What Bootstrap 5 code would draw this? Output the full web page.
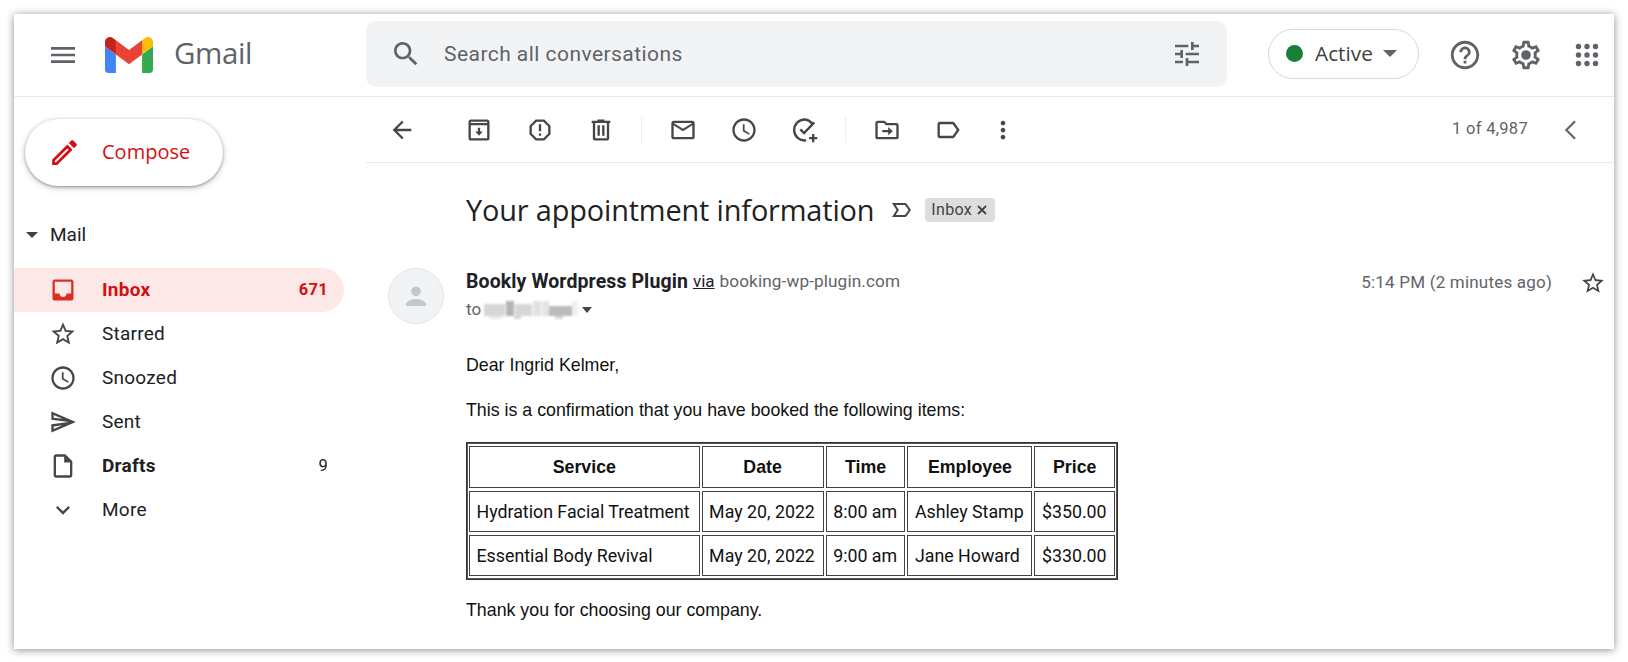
<!DOCTYPE html>
<html lang="en">
<head>
<meta charset="utf-8">
<title>Gmail</title>
<link href="https://cdn.jsdelivr.net/npm/bootstrap@5.3.0/dist/css/bootstrap.min.css" rel="stylesheet">
<style>
html,body{height:662px;overflow:hidden;background:#fff;font-family:Roboto,"Liberation Sans",sans-serif;color:#202124}
svg{display:block;flex:none}
.gm-window{margin:14px 14px 0;height:635px;background:#fff;box-shadow:0 1px 8px rgba(0,0,0,.45);overflow:hidden}
.gm-header{height:83px;border-bottom:1px solid #e6ebef}
.gm-brand{width:352px;padding-left:33px}
.gm-menu{width:32px;height:32px;fill:#5f6368;margin-right:26px}
.gm-wordmark{font-family:"Open Sans",sans-serif;font-size:29.5px;color:#5f6368;margin-left:21px;letter-spacing:-.4px;margin-top:-4px}
.gm-search{width:861px;height:66px;margin-top:-3px;background:#f1f3f4;border-radius:10px;padding:0 24px 0 24px;color:#5f6368;font-size:21px}
.gm-search-text{margin-left:22px;letter-spacing:.45px;margin-top:2px}
.gm-pill{width:151px;height:50px;margin-left:41px;margin-top:-3px;border:1.5px solid #d5d8dc;border-radius:25px;padding-left:17px;font-size:20.8px;font-family:"Open Sans",Roboto,sans-serif;color:#3c4043}
.gm-dot{width:17px;height:17px;border-radius:50%;background:#188038;margin-right:12px}
.gm-caret{width:0;height:0;border-left:7px solid transparent;border-right:7px solid transparent;border-top:7px solid #5f6368;margin-left:10px}
.gm-side-icons{margin-left:29px;gap:27px;fill:#5f6368}
.gm-side{width:352px;padding-top:22px}
.gm-compose{width:198px;height:67px;margin-left:11px;border-radius:34px;background:#fff;box-shadow:0 1px 3px rgba(60,64,67,.45),0 2px 6px rgba(60,64,67,.25);color:#d50f0f;font-size:20px;font-family:"Open Sans",Roboto,sans-serif;padding-left:23px;gap:21px}
.gm-compose span{margin-top:-2px}
.gm-mail{margin:37px 0 21px 12px;font-size:19px;height:24px}
.gm-mail-caret{width:0;height:0;border-left:6px solid transparent;border-right:6px solid transparent;border-top:6px solid #3c4043;margin-right:12px}
.gm-row{height:44px;width:330px;padding:0 16px 0 35px;border-radius:0 22px 22px 0;font-size:19px;letter-spacing:.25px}
.gm-row svg{width:28px;height:28px;fill:#444746;margin-right:25px}
.gm-row-on{background:#fce8e6;color:#d50f0f;font-weight:700}
.gm-row-on svg{fill:#d93025}
.gm-count{margin-left:auto;font-size:16.5px}
.gm-toolbar{height:66px;border-bottom:1px solid #e6ebef;padding-left:5px;fill:#444746}
.gm-slot{width:61px;display:flex;justify-content:center;align-items:center}
.gm-slot svg{width:28px;height:28px}
.gm-back{margin-right:16px}
.gm-sep{width:1px;height:26px;background:#eceff1;margin:0 10px 0 10px}
.gm-more{margin-left:-6px}
.gm-range{margin-left:auto;font-size:16.5px;color:#5f6368;letter-spacing:.3px;margin-right:29px}
.gm-prev{width:28px;height:28px;fill:none;stroke:#5f6368;stroke-width:1.8;margin-right:29px}
.gm-subject-line{padding:14px 0 0 100px;height:80px}
.gm-subject{font-family:"Open Sans",sans-serif;font-size:28.9px;color:#202124;margin:0;font-weight:400;letter-spacing:-.15px}
.gm-label{margin-left:15px}
.gm-chip{background:#ddd;border-radius:4px;font-size:16px;color:#444;height:24px;padding:0 7px 0 6px;margin-left:12px;letter-spacing:.3px}
.gm-message{padding:0 8px 0 22px;margin-top:26px}
.gm-avatar{width:56px;height:56px;border-radius:50%;background:#f1f3f4;border:1px solid #e3e5e7;margin-right:22px;margin-top:-1px}
.gm-avatar svg{width:32px;height:32px;fill:#c4c7c9}
.gm-name{font-weight:700;font-size:19.5px;letter-spacing:.1px;line-height:28px;margin-top:-3px}
.gm-via{text-decoration:underline;font-size:17px;color:#202124;margin-left:5px;margin-top:-2px}
.gm-domain{font-size:17.2px;color:#5f6368;margin-left:5px;letter-spacing:.1px;margin-top:-2px}
.gm-meta{margin-left:auto;font-size:17px;color:#5f6368;letter-spacing:.2px;height:28px}
.gm-star{width:26px;height:26px;fill:#444746;margin-left:28px}
.gm-to{font-size:17px;color:#5f6368;margin-top:2px;height:22px}
.gm-redact{filter:blur(1px);margin-left:2px}
.gm-to-caret{width:0;height:0;border-left:5.5px solid transparent;border-right:5.5px solid transparent;border-top:6px solid #444;margin-left:3px}
.gm-body{padding:30px 0 0 100px;font-family:"Liberation Sans",Arial,sans-serif;font-size:17.8px;color:#111;line-height:22px}
.gm-body p{margin:0 0 23px}
.gm-body p.gm-intro{margin-bottom:21px}
.gm-table{border-collapse:separate;border-spacing:2px 3px;border:1px solid #333;font-family:Roboto,sans-serif;font-size:17.8px;color:#111;margin-bottom:19px;width:652px;outline:1px solid #555;outline-offset:-2px}
.gm-table th,.gm-table td{border:1px solid #444;height:41px;padding:0 6.5px;white-space:nowrap}
.gm-table th{height:42px;text-align:center;font-weight:700;font-family:"Liberation Sans",sans-serif;font-size:17.8px}
</style>
</head>
<body>
<div class="gm-window d-flex flex-column">
  <header class="gm-header d-flex align-items-center">
    <div class="gm-brand d-flex align-items-center">
      <svg class="gm-menu" viewBox="0 0 24 24"><path d="M3 18h18v-2H3v2zm0-5h18v-2H3v2zm0-7v2h18V6H3z"/></svg>
      <svg width="48" height="36" viewBox="52 42 88 66"><path fill="#4285f4" d="M58 108h14V74L52 59v43c0 3.32 2.69 6 6 6"/><path fill="#34a853" d="M120 108h14c3.32 0 6-2.69 6-6V59l-20 15"/><path fill="#fbbc04" d="M120 48v26l20-15v-8c0-7.42-8.47-11.65-14.4-7.2"/><path fill="#ea4335" d="M72 74V48l24 18 24-18v26L96 92"/><path fill="#c5221f" d="M52 51v8l20 15V48l-5.6-4.2c-5.94-4.45-14.4-.22-14.4 7.2"/></svg>
      <span class="gm-wordmark">Gmail</span>
    </div>
    <div class="gm-search d-flex align-items-center">
      <svg width="32" height="32" viewBox="0 0 24 24" fill="#5f6368"><path d="M15.5 14h-.79l-.28-.27C15.41 12.59 16 11.11 16 9.5 16 5.91 13.09 3 9.5 3S3 5.91 3 9.5 5.91 16 9.5 16c1.61 0 3.09-.59 4.23-1.57l.27.28v.79l5 4.99L20.49 19l-4.99-5zm-6 0C7.01 14 5 11.99 5 9.5S7.01 5 9.5 5 14 7.01 14 9.5 11.99 14 9.5 14z"/></svg>
      <span class="gm-search-text">Search all conversations</span>
      <svg class="ms-auto" width="32" height="32" viewBox="0 0 24 24" fill="#5f6368"><path d="M3 17v2h6v-2H3zM3 5v2h10V5H3zm10 16v-2h8v-2h-8v-2h-2v6h2zM7 9v2H3v2h4v2h2V9H7zm14 4v-2H11v2h10zm-6-4h2V7h4V5h-4V3h-2v6z"/></svg>
    </div>
    <div class="gm-pill d-flex align-items-center"><span class="gm-dot"></span>Active<span class="gm-caret"></span></div>
    <div class="gm-side-icons d-flex align-items-center">
      <svg width="34" height="34" viewBox="0 0 24 24"><path d="M11 18h2v-2h-2v2zm1-16C6.48 2 2 6.48 2 12s4.48 10 10 10 10-4.48 10-10S17.52 2 12 2zm0 18c-4.41 0-8-3.59-8-8s3.59-8 8-8 8 3.59 8 8-3.59 8-8 8zm0-14c-2.21 0-4 1.79-4 4h2c0-1.1.9-2 2-2s2 .9 2 2c0 2-3 1.75-3 5h2c0-2.25 3-2.5 3-5 0-2.21-1.79-4-4-4z"/></svg>
      <svg width="34" height="34" viewBox="0 0 24 24"><path d="M19.43 12.98c.04-.32.07-.64.07-.98 0-.34-.03-.66-.07-.98l2.11-1.65c.19-.15.24-.42.12-.64l-2-3.46c-.09-.16-.26-.25-.44-.25-.06 0-.12.01-.17.03l-2.49 1c-.52-.4-1.08-.73-1.69-.98l-.38-2.65C14.46 2.18 14.25 2 14 2h-4c-.25 0-.46.18-.49.42l-.38 2.65c-.61.25-1.17.59-1.69.98l-2.49-1c-.06-.02-.12-.03-.18-.03-.17 0-.34.09-.43.25l-2 3.46c-.13.22-.07.49.12.64l2.11 1.65c-.04.32-.07.65-.07.98 0 .33.03.66.07.98l-2.11 1.65c-.19.15-.24.42-.12.64l2 3.46c.09.16.26.25.44.25.06 0 .12-.01.17-.03l2.49-1c.52.4 1.08.73 1.69.98l.38 2.65c.03.24.24.42.49.42h4c.25 0 .46-.18.49-.42l.38-2.65c.61-.25 1.17-.59 1.69-.98l2.49 1c.06.02.12.03.18.03.17 0 .34-.09.43-.25l2-3.46c.12-.22.07-.49-.12-.64l-2.11-1.65zm-1.98-1.71c.04.31.05.52.05.73 0 .21-.02.43-.05.73l-.14 1.13.89.7 1.08.84-.7 1.21-1.27-.51-1.04-.42-.9.68c-.43.32-.84.56-1.25.73l-1.06.43-.16 1.13-.2 1.35h-1.4l-.19-1.35-.16-1.13-1.06-.43c-.43-.18-.83-.41-1.23-.71l-.91-.7-1.06.43-1.27.51-.7-1.21 1.08-.84.89-.7-.14-1.13c-.03-.31-.05-.54-.05-.74s.02-.43.05-.73l.14-1.13-.89-.7-1.08-.84.7-1.21 1.27.51 1.04.42.9-.68c.43-.32.84-.56 1.25-.73l1.06-.43.16-1.13.2-1.35h1.39l.19 1.35.16 1.13 1.06.43c.43.18.83.41 1.23.71l.91.7 1.06-.43 1.27-.51.7 1.21-1.07.85-.89.7.14 1.13z"/><circle cx="12" cy="12" r="3.4"/></svg>
      <svg width="34" height="34" viewBox="0 0 34 34"><g><circle cx="8.5" cy="8.5" r="2.7"/><circle cx="17" cy="8.5" r="2.7"/><circle cx="25.5" cy="8.5" r="2.7"/><circle cx="8.5" cy="17" r="2.7"/><circle cx="17" cy="17" r="2.7"/><circle cx="25.5" cy="17" r="2.7"/><circle cx="8.5" cy="25.5" r="2.7"/><circle cx="17" cy="25.5" r="2.7"/><circle cx="25.5" cy="25.5" r="2.7"/></g></svg>
    </div>
  </header>
  <div class="d-flex flex-grow-1">
    <aside class="gm-side">
      <div class="gm-compose d-flex align-items-center">
        <svg width="33" height="33" viewBox="0 0 24 24" fill="#d50f0f"><path d="M3 17.25V21h3.75L17.81 9.94l-3.75-3.75L3 17.25zM5.92 19H5v-.92l9.06-9.06.92.92L5.92 19zM20.71 5.63l-2.34-2.34c-.2-.2-.45-.29-.71-.29s-.51.1-.7.29l-1.83 1.83 3.75 3.75 1.83-1.83c.39-.39.39-1.02 0-1.41z"/></svg>
        <span>Compose</span>
      </div>
      <div class="gm-mail d-flex align-items-center"><span class="gm-mail-caret"></span>Mail</div>
      <div class="gm-row gm-row-on d-flex align-items-center"><svg viewBox="0 0 24 24"><path d="M19 3H5c-1.1 0-2 .9-2 2v14c0 1.1.9 2 2 2h14c1.1 0 2-.9 2-2V5c0-1.1-.9-2-2-2zm0 12h-4c0 1.66-1.34 3-3 3s-3-1.34-3-3H5V5h14v10z"/></svg>Inbox<span class="gm-count">671</span></div>
      <div class="gm-row d-flex align-items-center"><svg viewBox="0 0 24 24"><path d="M22 9.24l-7.19-.62L12 2 9.19 8.63 2 9.24l5.46 4.73L5.82 21 12 17.27 18.18 21l-1.63-7.03L22 9.24zM12 15.4l-3.76 2.27 1-4.28-3.32-2.88 4.38-.38L12 6.1l1.71 4.04 4.38.38-3.32 2.88 1 4.28L12 15.4z"/></svg>Starred</div>
      <div class="gm-row d-flex align-items-center"><svg viewBox="0 0 24 24"><path d="M11.99 2C6.47 2 2 6.48 2 12s4.47 10 9.99 10C17.52 22 22 17.52 22 12S17.52 2 11.99 2zM12 20c-4.42 0-8-3.58-8-8s3.58-8 8-8 8 3.58 8 8-3.58 8-8 8zm.5-13H11v6l5.25 3.15.75-1.23-4.5-2.67z"/></svg>Snoozed</div>
      <div class="gm-row d-flex align-items-center"><svg viewBox="0 0 24 24"><path d="M4.01 6.03l7.51 3.22-7.52-1 .01-2.22m7.5 8.72L4 17.97v-2.22l7.51-1M2.01 3L2 10l15 2-15 2 .01 7L23 12 2.01 3z"/></svg>Sent</div>
      <div class="gm-row d-flex align-items-center fw-bold"><svg viewBox="0 0 24 24"><path d="M14 2H6c-1.1 0-1.99.9-1.99 2L4 20c0 1.1.89 2 1.99 2H18c1.1 0 2-.9 2-2V8l-6-6zm4 18H6V4h7v5h5v11z"/></svg>Drafts<span class="gm-count fw-normal">9</span></div>
      <div class="gm-row d-flex align-items-center"><svg viewBox="0 0 24 24"><path d="M16.59 8.59L12 13.17 7.41 8.59 6 10l6 6 6-6z"/></svg>More</div>
    </aside>
    <main class="flex-grow-1">
      <div class="gm-toolbar d-flex align-items-center">
        <span class="gm-slot gm-back"><svg viewBox="0 0 24 24"><path d="M20 11H7.83l5.59-5.59L12 4l-8 8 8 8 1.41-1.41L7.83 13H20v-2z"/></svg></span>
        <span class="gm-slot"><svg viewBox="0 0 24 24"><path d="M19 3H5c-1.1 0-2 .9-2 2v14c0 1.1.9 2 2 2h14c1.1 0 2-.9 2-2V5c0-1.1-.9-2-2-2zm0 16H5V8h14v11zM5 6V5h14v1H5z"/><path d="M11 10h2v3.2h2.2L12 17l-3.2-3.8H11z"/></svg></span>
        <span class="gm-slot"><svg viewBox="0 0 24 24"><path d="M15.73 3H8.27L3 8.27v7.46L8.27 21h7.46L21 15.73V8.27L15.73 3zM19 14.9L14.9 19H9.1L5 14.9V9.1L9.1 5h5.8L19 9.1v5.8z"/><path d="M11 7h2v6h-2zM11 15h2v2h-2z"/></svg></span>
        <span class="gm-slot"><svg viewBox="0 0 24 24"><path d="M15 4V3H9v1H4v2h1v13c0 1.1.9 2 2 2h10c1.1 0 2-.9 2-2V6h1V4h-5zm2 15H7V6h10v13zM9 8h2v9H9zm4 0h2v9h-2z"/></svg></span>
        <span class="gm-sep"></span>
        <span class="gm-slot"><svg viewBox="0 0 24 24"><path d="M22 6c0-1.1-.9-2-2-2H4c-1.1 0-2 .9-2 2v12c0 1.1.9 2 2 2h16c1.1 0 2-.9 2-2V6zm-2 0l-8 5-8-5h16zm0 12H4V8l8 5 8-5v10z"/></svg></span>
        <span class="gm-slot"><svg viewBox="0 0 24 24"><path d="M11.99 2C6.47 2 2 6.48 2 12s4.47 10 9.99 10C17.52 22 22 17.52 22 12S17.52 2 11.99 2zM12 20c-4.42 0-8-3.58-8-8s3.58-8 8-8 8 3.58 8 8-3.58 8-8 8zm.5-13H11v6l5.25 3.15.75-1.23-4.5-2.67z"/></svg></span>
        <span class="gm-slot"><svg viewBox="0 0 24 24" fill="none" stroke="#444746" stroke-width="2"><path d="M18.5 7.2A9 9 0 0 0 12 3a9 9 0 1 0 1 17.9"/><path d="M8 11.5l3.2 3.2L20 5.5"/><path d="M19 15.5v7M15.5 19h7"/></svg></span>
        <span class="gm-sep"></span>
        <span class="gm-slot"><svg viewBox="0 0 24 24"><path d="M20 6h-8l-2-2H4c-1.1 0-1.99.9-1.99 2L2 18c0 1.1.9 2 2 2h16c1.1 0 2-.9 2-2V8c0-1.1-.9-2-2-2zm0 12H4V6h5.17l2 2H20v10z"/><path d="M8 12h5V9.5l4 3.5-4 3.5V14H8z"/></svg></span>
        <span class="gm-slot"><svg viewBox="0 0 24 24"><path d="M17.63 5.84C17.27 5.33 16.67 5 16 5L5 5.01C3.9 5.01 3 5.9 3 7v10c0 1.1.9 1.99 2 1.99L16 19c.67 0 1.27-.33 1.63-.84L22 12l-4.37-6.16zM16 17H5V7h11l3.55 5L16 17z"/></svg></span>
        <span class="gm-slot gm-more"><svg viewBox="0 0 24 24"><path d="M12 8c1.1 0 2-.9 2-2s-.9-2-2-2-2 .9-2 2 .9 2 2 2zm0 2c-1.1 0-2 .9-2 2s.9 2 2 2 2-.9 2-2-.9-2-2-2zm0 6c-1.1 0-2 .9-2 2s.9 2 2 2 2-.9 2-2-.9-2-2-2z"/></svg></span>
        <span class="gm-range">1 of 4,987</span>
        <svg class="gm-prev" viewBox="0 0 24 24"><path d="M15.5 4.5L8 12l7.5 7.5"/></svg>
      </div>
      <div class="gm-subject-line d-flex align-items-center">
        <h1 class="gm-subject">Your appointment information</h1>
        <svg class="gm-label" width="24" height="24" viewBox="0 0 24 24" fill="#444746"><path d="M17.63 5.84C17.27 5.33 16.67 5 16 5H3l4.5 7L3 19h13c.67 0 1.27-.33 1.63-.84L22 12l-4.37-6.16zM16 17H6.7l3.2-5-3.2-5H16l3.55 5L16 17z"/></svg>
        <span class="gm-chip d-flex align-items-center">Inbox&nbsp;<svg width="12" height="12" viewBox="0 0 12 12" stroke="#444" stroke-width="1.8"><path d="M2 2l8 8M10 2l-8 8"/></svg></span>
      </div>
      <div class="gm-message d-flex">
        <div class="gm-avatar d-flex align-items-center justify-content-center"><svg viewBox="0 0 24 24"><circle cx="12" cy="8.5" r="3.6"/><path d="M4.5 18.5c0-2.8 5-4.2 7.5-4.2s7.5 1.4 7.5 4.2v1h-15z"/></svg></div>
        <div class="flex-grow-1">
          <div class="d-flex align-items-center">
            <span class="gm-name">Bookly Wordpress Plugin</span><span class="gm-via">via</span><span class="gm-domain">booking-wp-plugin.com</span>
            <span class="gm-meta d-flex align-items-center">5:14 PM (2 minutes ago)<svg class="gm-star" viewBox="0 0 24 24"><path d="M22 9.24l-7.19-.62L12 2 9.19 8.63 2 9.24l5.46 4.73L5.82 21 12 17.27 18.18 21l-1.63-7.03L22 9.24zM12 15.4l-3.76 2.27 1-4.28-3.32-2.88 4.38-.38L12 6.1l1.71 4.04 4.38.38-3.32 2.88 1 4.28L12 15.4z"/></svg></span>
          </div>
          <div class="gm-to d-flex align-items-center">to
            <svg class="gm-redact" width="96" height="22" viewBox="0 0 100 22" shape-rendering="crispEdges"><g fill="#d6d6d6"><rect x="1" y="5" width="22" height="12"/><rect x="24" y="2" width="8" height="15" fill="#b4b4b4"/><rect x="33" y="5" width="18" height="12"/><rect x="52" y="2" width="8" height="15" fill="#e2e2e2"/><rect x="61" y="2" width="8" height="15" fill="#e4e4e4"/><rect x="69" y="7" width="24" height="10" fill="#bbb"/><rect x="93" y="2" width="6" height="15" fill="#f0f0f0"/><rect x="6" y="17" width="14" height="3" fill="#eaeaea"/><rect x="32" y="17" width="8" height="3"/><rect x="75" y="17" width="8" height="3"/></g></svg>
            <span class="gm-to-caret"></span>
          </div>
        </div>
      </div>
      <div class="gm-body">
        <p>Dear Ingrid Kelmer,</p>
        <p class="gm-intro">This is a confirmation that you have booked the following items:</p>
        <table class="gm-table">
          <thead><tr><th>Service</th><th>Date</th><th>Time</th><th>Employee</th><th>Price</th></tr></thead>
          <tbody>
            <tr><td>Hydration Facial Treatment</td><td>May 20, 2022</td><td>8:00 am</td><td>Ashley Stamp</td><td>$350.00</td></tr>
            <tr><td>Essential Body Revival</td><td>May 20, 2022</td><td>9:00 am</td><td>Jane Howard</td><td>$330.00</td></tr>
          </tbody>
        </table>
        <p>Thank you for choosing our company.</p>
      </div>
    </main>
  </div>
</div>
<script src="https://cdn.jsdelivr.net/npm/bootstrap@5.3.0/dist/js/bootstrap.bundle.min.js"></script>
</body>
</html>
